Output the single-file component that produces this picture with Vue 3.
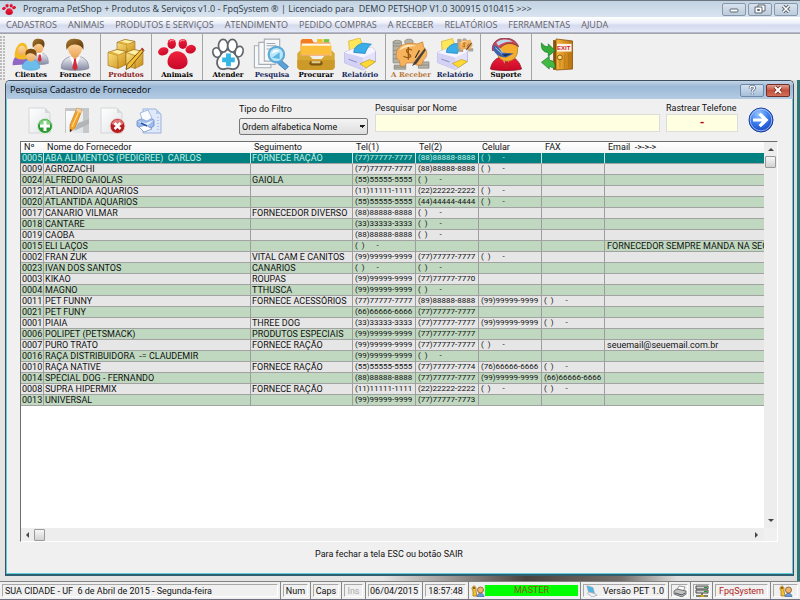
<script setup>
import { ref } from 'vue'

const menus = ['CADASTROS', 'ANIMAIS', 'PRODUTOS E SERVIÇOS', 'ATENDIMENTO', 'PEDIDO COMPRAS', 'A RECEBER', 'RELATÓRIOS', 'FERRAMENTAS', 'AJUDA']

const groups = [
  [{ icon: 'clients', label: 'Clientes' }, { icon: 'supplier', label: 'Fornece' }],
  [{ icon: 'boxes', label: 'Produtos', tone: 'red' }],
  [{ icon: 'paw', label: 'Animais' }],
  [
    { icon: 'care', label: 'Atender' },
    { icon: 'search', label: 'Pesquisa', tone: 'navy' },
    { icon: 'drawer', label: 'Procurar' },
    { icon: 'report', label: 'Relatório', tone: 'navy' }
  ],
  [{ icon: 'piggy', label: 'A Receber', tone: 'tan' }, { icon: 'report-cash', label: 'Relatório', tone: 'navy' }],
  [{ icon: 'support', label: 'Suporte' }],
  [{ icon: 'exit', badge: 'EXIT' }]
]

const none = '(  )      -'
const headers = ['Nº', 'Nome do Fornecedor', 'Seguimento', 'Tel(1)', 'Tel(2)', 'Celular', 'FAX', 'Email  ->->->']
const rows = [
  ['0005', 'ABA ALIMENTOS (PEDIGREE)  CARLOS', 'FORNECE RAÇÃO', '(77)77777-7777', '(88)88888-8888', none, '', ''],
  ['0009', 'AGROZACHI', '', '(77)77777-7777', '(88)88888-8888', none, '', ''],
  ['0024', 'ALFREDO GAIOLAS', 'GAIOLA', '(55)55555-5555', none, '', '', ''],
  ['0012', 'ATLANDIDA AQUARIOS', '', '(11)11111-1111', '(22)22222-2222', none, '', ''],
  ['0020', 'ATLANTIDA AQUARIOS', '', '(55)55555-5555', '(44)44444-4444', none, '', ''],
  ['0017', 'CANARIO VILMAR', 'FORNECEDOR DIVERSO', '(88)88888-8888', none, '', '', ''],
  ['0018', 'CANTARE', '', '(33)33333-3333', none, '', '', ''],
  ['0019', 'CAOBA', '', '(88)88888-8888', none, '', '', ''],
  ['0015', 'ELI LAÇOS', '', none, '', '', '', 'FORNECEDOR SEMPRE MANDA NA SEGUNDA'],
  ['0002', 'FRAN ZUK', 'VITAL CAM E CANITOS', '(99)99999-9999', '(77)77777-7777', none, '', ''],
  ['0023', 'IVAN DOS SANTOS', 'CANARIOS', none, none, '', '', ''],
  ['0003', 'KIKAO', 'ROUPAS', '(99)99999-9999', '(77)77777-7770', '', '', ''],
  ['0004', 'MAGNO', 'TTHUSCA', '(99)99999-9999', none, '', '', ''],
  ['0011', 'PET FUNNY', 'FORNECE ACESSÓRIOS', '(77)77777-7777', '(89)88888-8888', '(99)99999-9999', none, ''],
  ['0021', 'PET FUNY', '', '(66)66666-6666', '(77)77777-7777', '', '', ''],
  ['0001', 'PIAIA', 'THREE DOG', '(33)33333-3333', '(77)77777-7777', '(99)99999-9999', none, ''],
  ['0006', 'POLIPET (PETSMACK)', 'PRODUTOS ESPECIAIS', '(99)99999-9999', '(77)77777-7777', '', '', ''],
  ['0007', 'PURO TRATO', 'FORNECE RAÇÃO', '(99)99999-9999', '(77)77777-7777', none, '', 'seuemail@seuemail.com.br'],
  ['0016', 'RAÇA DISTRIBUIDORA  -= CLAUDEMIR', '', '(99)99999-9999', none, '', '', ''],
  ['0010', 'RAÇA NATIVE', 'FORNECE RAÇÃO', '(55)55555-5555', '(77)77777-7774', '(76)66666-6666', none, ''],
  ['0014', 'SPECIAL DOG - FERNANDO', '', '(88)88888-8888', '(77)77777-7777', '(99)99999-9999', '(66)66666-6666', ''],
  ['0008', 'SUPRA HIPERMIX', 'FORNECE RAÇÃO', '(11)11111-1111', '(22)22222-2222', none, none, ''],
  ['0013', 'UNIVERSAL', '', '(99)99999-9999', '(77)77777-7773', '', '', '']
]

const selected = ref('0005')
const name = ref('')
const phone = ref('-')
</script>

<template>
  <div class="app">
    <svg class="sprite" aria-hidden="true">
      <defs>
        <linearGradient id="gGold" x1="0" y1="0" x2="1" y2="1"><stop offset="0" stop-color="#ffe98a" /><stop offset="1" stop-color="#c98a12" /></linearGradient>
        <linearGradient id="gSuit" x1="0" y1="0" x2="0" y2="1"><stop offset="0" stop-color="#f1f2f8" /><stop offset="1" stop-color="#8488a2" /></linearGradient>
        <linearGradient id="gSkin" x1="0" y1="0" x2="0" y2="1"><stop offset="0" stop-color="#ffd9a4" /><stop offset="1" stop-color="#eda85c" /></linearGradient>
        <linearGradient id="gHair" x1="0" y1="0" x2="1" y2="1"><stop offset="0" stop-color="#a87830" /><stop offset="1" stop-color="#563408" /></linearGradient>
        <linearGradient id="gRed" x1="0" y1="0" x2="0" y2="1"><stop offset="0" stop-color="#f0203c" /><stop offset="1" stop-color="#c80828" /></linearGradient>
        <radialGradient id="gBlue" cx="0.4" cy="0.25" r="0.8"><stop offset="0" stop-color="#9cc8ff" /><stop offset="0.5" stop-color="#3b7cee" /><stop offset="1" stop-color="#1240b8" /></radialGradient>
        <linearGradient id="gPage" x1="0" y1="0" x2="1" y2="1"><stop offset="0" stop-color="#ffffff" /><stop offset="1" stop-color="#dfe3e6" /></linearGradient>
        <linearGradient id="gWood" x1="0" y1="0" x2="1" y2="0"><stop offset="0" stop-color="#f7b63c" /><stop offset="1" stop-color="#b8700c" /></linearGradient>
      </defs>

      <symbol id="supplier" viewBox="0 0 36 36">
        <path d="M3 33C3 25 8 21 14 20h8c6 1 11 5 11 13-4 3-26 3-30 0z" fill="url(#gSuit)" stroke="#74788e" stroke-width=".7" />
        <path d="M12 20h12l-6 15z" fill="#fff" />
        <path d="M16.500 22h3l-.5 2 2 9-3 2.500-3-2.500 2-9z" fill="#d22c36" />
        <path d="M14 15h8v5l-4 3-4-3z" fill="#e9a65c" />
        <path d="M10 8c0-4 16-4 16 0 0 8-3 12-8 12s-8-4-8-12z" fill="url(#gSkin)" />
        <path d="M9 13C6 3 13 0 19 1c8 0 9 6 8 12-1-3-3-5-8-6-4 0-8 1-10 6z" fill="url(#gHair)" />
      </symbol>

      <symbol id="clients" viewBox="0 0 38 34">
        <path d="M20 26c0-7 4-11 8-11s9 3 9 11c-4 2-13 2-17 0z" fill="url(#gSuit)" stroke="#8e91a5" stroke-width=".6" />
        <path d="M25 15h6l-3 10z" fill="#fff" /><path d="M27 17h2l1 6-2 2-2-2z" fill="#d6323c" />
        <ellipse cx="27" cy="9" rx="5" ry="6.500" fill="url(#gSkin)" />
        <path d="M21 10c-2-8 3-10 7-9 5 0 6 5 4 9-2-5-7-6-11 0z" fill="url(#gHair)" />
        <path d="M0 28c0-8 4-10 8-10s9 3 9 9z" fill="#9067c4" />
        <path d="M2 19C3 3 13 2 15 9c1 5 1 7 2 11-5 3-12 3-15-1z" fill="#f4bb22" />
        <ellipse cx="9.500" cy="13" rx="4" ry="5" fill="url(#gSkin)" />
        <path d="M10 31c0-6 4-9 9-9s9 3 9 9c-4 3-14 3-18 0z" fill="#6cbcec" stroke="#3a93c9" stroke-width=".5" />
        <ellipse cx="19" cy="18.500" rx="4.800" ry="6" fill="url(#gSkin)" />
        <path d="M13.500 18c-1-6 3-7 6-7 4 0 6 3 5 8-2-3-7-5-11-1z" fill="#7c4b16" />
      </symbol>

      <symbol id="boxes" viewBox="0 0 38 32">
        <g stroke="#9c6a10" stroke-width=".6">
          <path d="M10 4l8-3 10 2v10l-8 3-10-2z" fill="url(#gGold)" /><path d="M10 4l8-3 10 2-8 3z" fill="#fff0a4" /><path d="M20 6v10" />
          <path d="M1 14l9-3 9 2v13l-8 4-10-3z" fill="url(#gGold)" /><path d="M1 14l9-3 9 2-8 4z" fill="#fff0a4" /><path d="M11 17v13" />
          <path d="M19 14l8-3 9 2v13l-8 4-9-3z" fill="url(#gGold)" /><path d="M19 14l8-3 9 2-8 4z" fill="#fff0a4" /><path d="M28 17v13" />
        </g>
        <path d="M13 3l9 2v4l-2 1V6l-9-2zM4 13l9 3v4l-2 1v-4l-9-3z" fill="#e3b23c" />
        <path d="M35 10l2 2-14 17-4 2 1-5z" fill="#f4bf35" stroke="#5a3a08" stroke-width=".8" /><path d="M34 11l1-2 2 2-1 2z" fill="#c0392b" />
      </symbol>

      <symbol id="paw" viewBox="0 0 36 30">
        <g fill="url(#gRed)"><ellipse cx="5" cy="12" rx="5" ry="3.800" transform="rotate(-20 5 12)" /><ellipse cx="13" cy="5" rx="4" ry="4.800" /><ellipse cx="23.500" cy="5" rx="4" ry="4.800" /><ellipse cx="31" cy="10" rx="5" ry="4" transform="rotate(-20 31 10)" /><path d="M18 12c6 0 10 5 10 10 0 4-4 7-9.500 7S9 26 9 22c0-5 4-10 9-10z" /></g>
        <path d="M11 3c1-2 3-2 4-1M21 3c1-2 3-2 4-1" stroke="#ff8a98" fill="none" />
      </symbol>

      <symbol id="care" viewBox="0 0 34 34">
        <g fill="#fff" stroke="#62666c" stroke-width="1.800"><path d="M17 12c5 0 6 4 9 7 5 7 1 14-5 13-3-1-5-1-8 0-6 1-10-6-5-13 3-3 4-7 9-7z" /><ellipse cx="5.500" cy="15" rx="4" ry="5" transform="rotate(-20 5.500 15)" /><ellipse cx="12" cy="8" rx="4.800" ry="6.500" /><ellipse cx="21.500" cy="8" rx="4.800" ry="6.500" /><ellipse cx="28.500" cy="14" rx="4" ry="5.500" transform="rotate(15 28.500 14)" /></g>
        <path d="M15 16h5v4h4v5h-4v4h-5v-4h-4v-5h4z" fill="#35b6e4" />
      </symbol>

      <symbol id="search" viewBox="0 0 34 30">
        <g fill="#f7f8f9" stroke="#a7adb4"><path d="M1 7h15v20H1z" /><path d="M5 4h15v20H5z" /><path d="M10 1h14v20H10z" /></g>
        <path d="M12 5h8M12 7h9M12 10h5" stroke="#a1a9b2" />
        <path d="M25 20l7 6-3 3-7-6z" fill="#5aa2d8" stroke="#3574ac" stroke-width=".7" />
        <circle cx="21" cy="15" r="7" fill="#bce7fa" stroke="#5daad6" stroke-width="2" />
        <path d="M17 14c1-4 5-4 7-2-3 0-5 2-7 2z" fill="#fff" /><path d="M17 18l7-5v6z" fill="#5bb8e4" />
      </symbol>

      <symbol id="drawer" viewBox="0 0 34 30">
        <path d="M3 3c0-1 1-2 2-2h8l2 3h15v12H3z" fill="#f47b1f" /><path d="M18 1h5v3h-5z" fill="#f0c21c" /><path d="M24 1h5v3h-5z" fill="#7ec241" />
        <path d="M4 5h26v10H4z" fill="#fff8e6" /><path d="M3 7h28v8H3z" fill="#fbbf3c" />
        <path d="M0 14l3-3v5h8l3 3h8l3-3h6v-5l3 3v13l-2 2H2l-2-2z" fill="#d8a835" />
        <path d="M0 20h34v7l-2 2H2l-2-2z" fill="#cd9a2a" /><rect x="11" y="21" width="12" height="4" rx="2" fill="#7b560c" /><rect x="13" y="21" width="8" height="2" fill="#e3ca8c" />
      </symbol>

      <symbol id="report" viewBox="0 0 32 32">
        <path d="M6 16L5 3l11-3 4 12z" fill="#ffe65a" stroke="#d4a50e" stroke-width=".6" />
        <path d="M1 14l7-3 20-2 3 4v10l-12 8-18-7z" fill="#e4e2fb" stroke="#b0aede" stroke-width=".8" />
        <path d="M1 14l18 5v12L1 24z" fill="#d3d2f5" /><path d="M1 14l7-3 20-2 3 4-12 6z" fill="#f5f4ff" />
        <path d="M10 14c0-5 4-8 9-9l8 1c-4 3-5 6-6 9z" fill="#39aee8" stroke="#1b7fb9" stroke-width=".7" />
        <path d="M5 20l8 3v1l-8-3z" fill="#8b89c4" /><path d="M16 25l9-4 6 2-9 6z" fill="#ffd935" stroke="#bd930a" stroke-width=".6" />
      </symbol>

      <symbol id="piggy" viewBox="0 0 36 30">
        <g fill="#b5b2a6" stroke="#7d7a70" stroke-width=".6"><path d="M1 3h8v20H1z" /><ellipse cx="5" cy="3" rx="4" ry="1.500" /><path d="M1 7h8M1 11h8M1 15h8M1 19h8" /><ellipse cx="16" cy="3" rx="4" ry="2.500" /><path d="M2 25h11v4H2zM25 22h10v6H25z" /><path d="M25 25h10M2 27h11" /></g>
        <path d="M4 15C4 5 16 3 24 5l5-2 1 5c4 3 4 9 0 12l-2 5h-5l-1-2h-8l-2 3H8l-1-5c-2-1-3-3-3-6z" fill="#f6b35c" stroke="#c07a34" stroke-width=".6" />
        <path d="M7 11c3-6 10-6 16-4-5 0-11 1-16 4z" fill="#ffe6b8" />
        <path d="M19 11c-4-3-7 0-4 2.500s4 4 0 4.500c-2 0-3-.5-4-1.500M15.500 8v12" fill="none" stroke="#9a5a14" stroke-width="1.200" />
        <path d="M31 9L21 22l-2 4 4-2 9-13z" fill="#4a423a" /><path d="M26 11l-4 7" stroke="#222" />
      </symbol>

      <symbol id="report-cash" viewBox="0 0 36 32">
        <use href="#report" x="0" y="0" width="31" height="32" /><use href="#piggy" x="20" y="0" width="16" height="14" />
      </symbol>

      <symbol id="support" viewBox="0 0 34 34">
        <path d="M1 32c1-7 5-11 12-13h8c7 2 10 6 12 13-5 2-27 2-32 0z" fill="url(#gRed)" stroke="#8c101a" stroke-width=".8" />
        <path d="M12 19l5 10 6-10z" fill="#f8f8f8" /><path d="M16 21h3l1 8-3 3-2-3z" fill="#c81c24" />
        <path d="M7 11C7 1 30 1 29 12c0 8-5 12-11 12S7 19 7 11z" fill="#f6ad2e" stroke="#97600e" stroke-width=".6" />
        <path d="M3 13C1-3 26-4 30 9c-4-3-9-4-12-3-6 1-6 7-15 7z" fill="#c8485a" stroke="#67253c" stroke-width=".7" />
        <path d="M7 5c4-5 13-4 17-1-6-1-11 1-15 4z" fill="#bcd8ea" />
        <path d="M4 8c3-1 7 3 9 7l12 1-8 4C9 20 3 15 4 8z" fill="#3f63ad" /><path d="M6 10l7 6M10 10l4 5" stroke="#a8d8ef" /><path d="M13 17l10-1-7 3z" fill="#1b2a54" />
      </symbol>

      <symbol id="exit" viewBox="0 0 34 34">
        <path d="M13 2l19 2v27l-19 2z" fill="#8b520a" /><path d="M16 1l17 2v29l-17 1z" fill="url(#gWood)" stroke="#84500c" stroke-width=".8" />
        <path d="M20 17v14M25 17v14M29 16v14" stroke="#a76a12" stroke-width=".6" /><path d="M17 6h15v8H17z" fill="#fff3e6" />
        <circle cx="20" cy="20" r="2.500" fill="#ffe17c" stroke="#85500c" />
        <path d="M1 5c2 3 4 4 7 4V6l7 7-7 6v-4c-5 0-8-4-7-10z" fill="#35ab3a" stroke="#187c23" stroke-width=".7" />
        <path d="M15 31c-2 0-4-1-6-2v3l-8-7 8-6v4c5 0 6 3 6 8z" fill="#43b843" stroke="#187c23" stroke-width=".7" />
      </symbol>

      <symbol id="add" viewBox="0 0 26 28">
        <path d="M1 1h16l5 5v20H1z" fill="url(#gPage)" stroke="#d3d6d8" /><path d="M17 1v5h5z" fill="#d5d9dc" />
        <circle cx="17" cy="19" r="7.500" fill="#2b9a35" stroke="#d7eed8" /><path d="M11 17c1-6 11-6 12 0-4 2-8 2-12 0z" fill="#82cf83" /><path d="M15.500 14h3v3.500H22v3h-3.500V24h-3v-3.500H12v-3h3.500z" fill="#fff" />
      </symbol>
      <symbol id="edit" viewBox="0 0 26 28">
        <path d="M1 1h24v25H1z" fill="#c6c7c9" /><path d="M2 4h17v22H2z" fill="url(#gPage)" /><path d="M14 16l11-4v5l-15 7z" fill="#b2b4b7" />
        <path d="M13 1l5 2-7 18-5 4 0-7z" fill="#f4a528" stroke="#b96c14" stroke-width=".6" /><path d="M13 1l5 2-1 3-5-2z" fill="#f6cf9a" /><path d="M6 25v-3l2 1z" fill="#222" /><path d="M14.500 5L8 20" stroke="#ffe29a" />
      </symbol>
      <symbol id="remove" viewBox="0 0 26 28">
        <path d="M1 1h16l5 5v20H1z" fill="url(#gPage)" stroke="#d3d6d8" /><path d="M17 1v5h5z" fill="#d5d9dc" />
        <circle cx="17.500" cy="19" r="7.500" fill="#b51d20" stroke="#f0d5d5" /><path d="M11.500 17c1-6 11-6 12 0-4 2-8 2-12 0z" fill="#e07876" /><path d="M14.500 16l6 6M20.500 16l-6 6" stroke="#fff" stroke-width="2.500" />
      </symbol>
      <symbol id="print" viewBox="0 0 26 28">
        <path d="M7 2h13l5 5v19H7z" fill="#dfe9fa" stroke="#9bb2de" /><path d="M20 2v5h5z" fill="#b6caee" /><path d="M22 10v14" stroke="#7fa0dd" stroke-dasharray="1 2" />
        <path d="M1 14l10-5 7 4v6l-8 5-9-5z" fill="#9ebbea" stroke="#5b80c2" stroke-width=".7" /><path d="M6 12L4 6l8-3 4 8-5 3z" fill="#f8fbff" stroke="#86a2d6" stroke-width=".7" /><path d="M1 14l10 5 7-6-8 3z" fill="#e7f0ff" /><path d="M3 20l7-2 6 4-8 3z" fill="#fff" stroke="#6b8cc8" stroke-width=".7" /><path d="M5 16l6 3" stroke="#2458b0" stroke-width="1.500" />
      </symbol>
      <symbol id="go" viewBox="0 0 26 26">
        <circle cx="13" cy="13" r="12" fill="url(#gBlue)" stroke="#1b3f9f" /><circle cx="13" cy="13" r="10.800" fill="none" stroke="#c3dcff" stroke-width=".7" />
        <path d="M5 11.500h9l-3.500-3.500 2.300-2.300L20.500 13l-7.700 7.300-2.300-2.300 3.500-3.500H5z" fill="#fff" />
      </symbol>
      <symbol id="users" viewBox="0 0 14 12">
        <path d="M1 4c0-4 4-4 4 0v2l1 5H2V6z" fill="#f1c232" stroke="#9b6810" stroke-width=".7" /><path d="M6 12c0-5 7-5 7 0z" fill="#6a9ad4" stroke="#36598d" stroke-width=".6" /><circle cx="9.500" cy="5" r="3" fill="#f2b46c" stroke="#714616" stroke-width=".7" /><circle cx="3" cy="3" r="1" fill="#704508" />
      </symbol>
      <symbol id="pc" viewBox="0 0 14 14"><path d="M1 1l7 2 2 7-7-2z" fill="#48b8e8" stroke="#92aab8" /><path d="M3 8l7 2 3 2-6 2-5-4z" fill="#eef1f3" stroke="#96a0a8" stroke-width=".8" /></symbol>
      <symbol id="printer" viewBox="0 0 14 12"><path d="M4 5l2-4 6 1-2 5z" fill="#fff" stroke="#777" stroke-width=".7" /><path d="M1 6l3-2 9 2v3l-4 3-8-3z" fill="#bfc2c5" stroke="#555" stroke-width=".8" /><path d="M2 8l7 2 3-2" fill="none" stroke="#555" /></symbol>
      <symbol id="server" viewBox="0 0 14 12"><path d="M1 1h12v3H1zM1 5h12v3H1z" fill="#d0d2d0" stroke="#3c3c3c" stroke-width=".9" /><path d="M9 2.500h3M9 6.500h3" stroke="#1b9c28" /><path d="M7 8v3M1 11h12" stroke="#5b5d35" stroke-width="1.500" /><path d="M6 10h3v2H6z" fill="#d5a818" /></symbol>
    </svg>

    <header class="title-bar">
      <svg class="title-icon"><use href="#paw" /></svg>
      <h1 class="title">Programa PetShop + Produtos &amp; Serviços v1.0 - FpqSystem ® | Licenciado para&nbsp; DEMO PETSHOP V1.0 300915 010415 &gt;&gt;&gt;</h1>
      <div class="win-buttons">
        <button class="win-btn" type="button" aria-label="Minimizar"><svg viewBox="0 0 12 10"><rect x="2" y="5" width="8" height="3" rx="1" fill="#fff" stroke="#5b6672" /></svg></button>
        <button class="win-btn" type="button" aria-label="Restaurar"><svg viewBox="0 0 12 10"><path d="M4 1h7v6H4z" fill="#fff" stroke="#5b6672" /><path d="M1 3h7v6H1z" fill="#fff" stroke="#5b6672" /><path d="M3.500 5.500h2v1h-2z" fill="none" stroke="#5b6672" /></svg></button>
        <button class="win-btn" type="button" aria-label="Fechar"><svg viewBox="0 0 12 10"><path d="M3 2l6 6M9 2L3 8" stroke="#5b6672" stroke-width="3.500" /><path d="M3 2l6 6M9 2L3 8" stroke="#fff" stroke-width="1.500" /></svg></button>
      </div>
    </header>

    <nav class="menu-bar">
      <a v-for="m in menus" :key="m" href="#" class="menu">{{ m }}</a>
    </nav>

    <div class="toolbar">
      <div class="grip"></div>
      <div v-for="(g, i) in groups" :key="i" class="tool-group">
        <button v-for="t in g" :key="t.icon" type="button" class="tool" :aria-label="t.label || 'Sair'">
          <svg class="tool-icon"><use :href="'#' + t.icon" /></svg>
          <span v-if="t.label" class="tool-label" :class="t.tone">{{ t.label }}</span>
          <span v-if="t.badge" class="tool-badge">{{ t.badge }}</span>
        </button>
      </div>
    </div>

    <main class="workspace">
      <section class="dialog">
        <header class="dialog-head">
          <h2 class="dialog-title">Pesquisa Cadastro de Fornecedor</h2>
          <button class="dlg-btn" type="button" aria-label="Ajuda"><svg viewBox="0 0 12 10"><path d="M4 3.500c0-3 4.500-3 4.500-.5C8.500 5 6.200 4.500 6.200 6.500M6.200 8v1.500" fill="none" stroke="#54657a" stroke-width="2.800" /><path d="M4 3.500c0-3 4.500-3 4.500-.5C8.500 5 6.200 4.500 6.200 6.500M6.200 8v1.500" fill="none" stroke="#fff" stroke-width="1.300" /></svg></button>
          <button class="dlg-btn close" type="button" aria-label="Fechar"><svg viewBox="0 0 12 10"><path d="M3 2l6 6M9 2L3 8" stroke="#6c2a20" stroke-width="3.500" /><path d="M3 2l6 6M9 2L3 8" stroke="#fff" stroke-width="2" /></svg></button>
        </header>

        <div class="dialog-body">
          <form class="filters" @submit.prevent>
            <div class="actions">
              <button class="action" type="button" aria-label="Novo"><svg><use href="#add" /></svg></button>
              <button class="action" type="button" aria-label="Editar"><svg><use href="#edit" /></svg></button>
              <button class="action" type="button" aria-label="Excluir"><svg><use href="#remove" /></svg></button>
              <button class="action" type="button" aria-label="Imprimir"><svg><use href="#print" /></svg></button>
            </div>
            <div class="field kind">
              <label for="kind">Tipo do Filtro</label>
              <select id="kind"><option>Ordem alfabetica Nome</option></select>
            </div>
            <div class="field name">
              <label for="name">Pesquisar por Nome</label>
              <input id="name" v-model="name" type="text" />
            </div>
            <div class="field phone">
              <label for="phone">Rastrear Telefone</label>
              <input id="phone" v-model="phone" type="text" />
            </div>
            <button class="go" type="submit" aria-label="Avançar"><svg><use href="#go" /></svg></button>
          </form>

          <div class="grid">
            <div class="grid-view">
              <table>
                <colgroup>
                  <col class="c-id" /><col class="c-name" /><col class="c-seg" /><col class="c-tel" /><col class="c-tel" /><col class="c-tel" /><col class="c-tel" /><col />
                </colgroup>
                <thead>
                  <tr><th v-for="h in headers" :key="h" scope="col">{{ h }}</th></tr>
                </thead>
                <tbody>
                  <tr v-for="r in rows" :key="r[0]" :class="{ selected: r[0] === selected }" @click="selected = r[0]">
                    <td v-for="(c, i) in r" :key="i" :class="{ tel: i > 2 && i < 7 }">{{ c }}</td>
                  </tr>
                </tbody>
              </table>
            </div>
            <div class="v-scroll"><i class="arrow up"></i><i class="thumb"></i><i class="arrow down"></i></div>
            <div class="h-scroll"><i class="arrow left"></i><i class="thumb"></i><i class="arrow right"></i></div>
            <div class="corner"></div>
          </div>

          <p class="hint">Para fechar a tela ESC ou botão SAIR</p>
        </div>
      </section>
    </main>

    <footer class="status">
      <div class="cell place"><span>SUA CIDADE - UF&nbsp; 6 de Abril de 2015 - Segunda-feira</span></div>
      <div class="cell num"><span>Num</span></div>
      <div class="cell caps"><span>Caps</span></div>
      <div class="cell ins"><span>Ins</span></div>
      <div class="cell date"><span>06/04/2015</span></div>
      <div class="cell time"><span>18:57:48</span></div>
      <div class="cell user"><svg><use href="#users" /></svg><b>MASTER</b></div>
      <div class="cell version"><span><svg><use href="#pc" /></svg>Versão PET 1.0</span></div>
      <div class="cell small"><span><svg><use href="#printer" /></svg></span></div>
      <div class="cell small"><span><svg><use href="#server" /></svg></span></div>
      <div class="cell brand"><span>FpqSystem</span></div>
      <div class="cell last"><span><svg><use href="#users" /></svg></span></div>
    </footer>
  </div>
</template>

<style>
body {
  margin: 0;
  background: #f0f0f0;
}
</style>

<style scoped>
* {
  box-sizing: border-box;
}
.app {
  display: flex;
  flex-direction: column;
  min-height: 100vh;
  font-family: Roboto, "Liberation Sans", sans-serif;
  font-size: 9px;
  line-height: 12px;
  color: #111;
  background: #f0f0f0;
}
.sprite {
  position: absolute;
  width: 0;
  height: 0;
}
button {
  padding: 0;
  border: 0;
  background: none;
  font: inherit;
}

.title-bar {
  display: flex;
  align-items: center;
  height: 17px;
  padding: 0 2px;
  gap: 7px;
  border-top: 1px solid #6b7681;
  background: linear-gradient(#c3d3e2, #d9e4f0);
}
.title-icon {
  width: 14px;
  height: 13px;
}
.title {
  flex: 1;
  margin: 0;
  font: 9px/16px "Open Sans", "Noto Sans", sans-serif;
  color: #2c3844;
  white-space: nowrap;
}
.win-buttons {
  display: flex;
  gap: 2px;
}
.win-btn {
  display: flex;
  align-items: center;
  justify-content: center;
  width: 24px;
  height: 13px;
  border: 1px solid #8798aa;
  border-radius: 2px;
  background: linear-gradient(#d9e3ee, #bccbdb);
}
.win-btn svg {
  width: 12px;
  height: 10px;
}

.menu-bar {
  display: flex;
  align-items: center;
  gap: 11px;
  height: 16px;
  padding: 0 6px;
  border-bottom: 1px solid #b4b6cc;
  background: linear-gradient(#ffffff, #eef0fa 40%, #d5daee 55%, #e3e7f6);
}
.menu {
  font: 9px/14px "Open Sans", "Noto Sans", sans-serif;
  color: #626266;
  text-decoration: none;
  white-space: nowrap;
}

.toolbar {
  display: flex;
  height: 47px;
  border-top: 1px solid #a5a5a8;
  background: #f0f0f0;
}
.grip {
  width: 6px;
  margin-top: 2px;
  background: radial-gradient(circle at 1px 1px, #bcbcbc 0 1px, transparent 1px) 0 0 / 3px 3px;
}
.tool-group {
  display: flex;
  padding: 1px 3px 0;
  border-right: 1px solid #a4a4a4;
}
.tool-group:last-child {
  border-right: 0;
}
.tool {
  position: relative;
  display: flex;
  flex-direction: column;
  align-items: center;
  width: 44px;
  padding-top: 3px;
}
.tool-icon {
  width: 38px;
  height: 33px;
}
.tool-label {
  font: bold 7px/8px "DejaVu Serif", serif;
  color: #000;
  white-space: nowrap;
}
.tool-label.red {
  color: #8e2323;
}
.tool-label.navy {
  color: #14285c;
}
.tool-label.tan {
  color: #b87a3c;
}
.tool-badge {
  position: absolute;
  top: 9px;
  left: 22px;
  color: #d22030;
  font: bold 6px/8px "Liberation Sans", sans-serif;
}

.workspace {
  display: flex;
  flex: 1;
  padding: 0 3px 5px 5px;
  border-right: 3px solid #2b7777;
  background: linear-gradient(90deg, #e4e4e4 48%, #4a423e 66%, #75706c 78%, #dedede 85%);
}
.dialog {
  display: flex;
  flex: 1;
  flex-direction: column;
  min-width: 0;
  border: 1px solid #3d4f5f;
  border-bottom: 2px solid #2d5f70;
  border-radius: 5px 5px 0 0;
  background: #f0f0f0;
  overflow: hidden;
}
.dialog-head {
  display: flex;
  align-items: center;
  gap: 2px;
  height: 18px;
  padding: 0 3px 0 4px;
  background: linear-gradient(#c4d6e8, #9cb9d6 30%, #b4cbe3);
}
.dialog-title {
  flex: 1;
  margin: 0;
  font: 9px/16px "Open Sans", "Noto Sans", sans-serif;
  color: #000;
}
.dlg-btn {
  display: flex;
  align-items: center;
  justify-content: center;
  width: 24px;
  height: 13px;
  border: 1px solid #6f89a6;
  border-radius: 2px;
  background: linear-gradient(#d3e0ee, #a6bfda);
}
.dlg-btn svg {
  width: 12px;
  height: 10px;
}
.dlg-btn.close {
  border-color: #702e28;
  background: linear-gradient(#e0a092, #c4503c 50%, #d0705a);
}
.dialog-body {
  display: flex;
  flex: 1;
  flex-direction: column;
  padding: 3px 14px 13px 13px;
  border: 1px solid #62cbe0;
  border-top: 0;
}

.filters {
  display: flex;
  align-items: flex-start;
  height: 39px;
}
.actions {
  display: flex;
  gap: 10px;
  width: 219px;
  padding: 5px 0 0 8px;
}
.action {
  width: 26px;
  height: 28px;
}
.action svg,
.go svg {
  display: block;
  width: 26px;
  height: 28px;
}
.field {
  display: flex;
  flex-direction: column;
}
.field label {
  white-space: nowrap;
}
.kind {
  width: 129px;
  margin-right: 7px;
  gap: 3px;
  padding-top: 1px;
}
.name {
  flex: 1;
  margin-right: 6px;
}
.phone {
  width: 72px;
  margin-right: 10px;
}
select,
input {
  width: 100%;
  height: 18px;
  border: 1px solid #dcdcdc;
  border-radius: 0;
  background: #ffffe1;
  font: inherit;
  color: inherit;
}
select {
  height: 17px;
  padding: 0 2px;
  border: 1px solid #777;
  border-radius: 2px;
  appearance: none;
  background: linear-gradient(to bottom right, transparent 50%, transparent 50%), linear-gradient(to bottom left, #222 50%, transparent 50%) right 5px top 6px / 3px 3px no-repeat, linear-gradient(to bottom right, #222 50%, transparent 50%) right 2px top 6px / 3px 3px no-repeat, linear-gradient(#f4f4f4, #dedede);
}
.phone input {
  color: #b01010;
  font-size: 12px;
  font-weight: bold;
  text-align: center;
}
.go {
  width: 26px;
  height: 28px;
  margin: 4px 4px 0 0;
}

.grid {
  display: grid;
  flex: 1;
  grid-template-columns: minmax(0, 1fr) 13px;
  grid-template-rows: minmax(0, 1fr) 13px;
  border-top: 1px solid #6e6e6e;
  border-left: 1px solid #6e6e6e;
  border-right: 1px solid #fff;
  border-bottom: 1px solid #fff;
}
.grid-view {
  overflow: hidden;
  background: #fff;
}
table {
  width: 100%;
  table-layout: fixed;
  border-collapse: separate;
  border-spacing: 0;
}
.c-id {
  width: 23px;
}
.c-name {
  width: 207px;
}
.c-seg {
  width: 102px;
}
.c-tel {
  width: 63px;
}
th,
td {
  height: 11px;
  padding: 0 0 0 1px;
  overflow: hidden;
  font-weight: normal;
  line-height: 10px;
  text-align: left;
  white-space: pre;
}
th {
  padding-left: 3px;
  background: linear-gradient(#ffffff, #f3f3f5);
  line-height: 11px;
}
td {
  border-right: 1px solid #9d9d9d;
  border-bottom: 1px solid #a2a2a2;
  background: #e6e6e6;
}
td.tel {
  padding-left: 2px;
  font-size: 8px;
}
td:last-child {
  padding-left: 2px;
  border-right: 0;
}
tbody tr:nth-child(odd) td {
  background: #c0d8c0;
}
tbody tr.selected td {
  border-right-color: #cfe3e3;
  background: #008080;
  color: #c5f0ea;
}
.v-scroll,
.h-scroll {
  display: flex;
  align-items: center;
  background: #ededed;
}
.v-scroll {
  flex-direction: column;
  padding: 6px 0;
}
.h-scroll {
  padding: 0 6px 0 5px;
}
.corner {
  background: #f0f0f0;
}
.thumb {
  width: 11px;
  height: 12px;
  border: 1px solid #999;
  border-radius: 1px;
  background: linear-gradient(#f6f6f6, #d2d2d2);
}
.v-scroll .thumb {
  margin-top: 5px;
}
.h-scroll .thumb {
  margin-left: 5px;
}
.arrow {
  width: 0;
  height: 0;
  border: 3px solid transparent;
}
.arrow.up {
  border-top-width: 0;
  border-bottom: 3px solid #444;
}
.arrow.down {
  margin-top: auto;
  border-bottom-width: 0;
  border-top: 3px solid #444;
}
.arrow.left {
  border-left-width: 0;
  border-right: 3px solid #444;
}
.arrow.right {
  margin-left: auto;
  border-right-width: 0;
  border-left: 3px solid #444;
}
.hint {
  margin: 0;
  padding: 6px 20px 0 0;
  text-align: center;
}

.status {
  display: flex;
  height: 19px;
  border-top: 1px solid #828282;
  border-bottom: 1px solid #707080;
  background: #f0f0f0;
}
.cell {
  display: flex;
  align-items: center;
  padding: 2px;
  border-right: 1px solid #868686;
  white-space: nowrap;
}
.cell span {
  display: flex;
  flex: 1;
  align-items: center;
  justify-content: center;
  height: 13px;
  border: 1px solid #a8a8a8;
  border-right-color: #fff;
  border-bottom-color: #fff;
}
.cell svg {
  flex: none;
  width: 14px;
  height: 12px;
}
.place {
  flex: 1;
}
.place span {
  justify-content: flex-start;
  padding-left: 2px;
}
.num {
  width: 30px;
}
.caps {
  width: 31px;
}
.ins {
  width: 24px;
  color: #aaa;
}
.date {
  width: 57px;
}
.time {
  width: 46px;
}
.user {
  width: 112px;
}
.user b {
  flex: 1;
  height: 11px;
  background: #00ff00;
  color: #8a5a10;
  font-weight: normal;
  line-height: 11px;
  text-align: center;
}
.version {
  width: 88px;
}
.version span {
  gap: 4px;
}
.small {
  width: 22px;
}
.brand {
  width: 58px;
  color: #b01c1c;
}
.last {
  width: 29px;
  border-right: 0;
}
</style>
